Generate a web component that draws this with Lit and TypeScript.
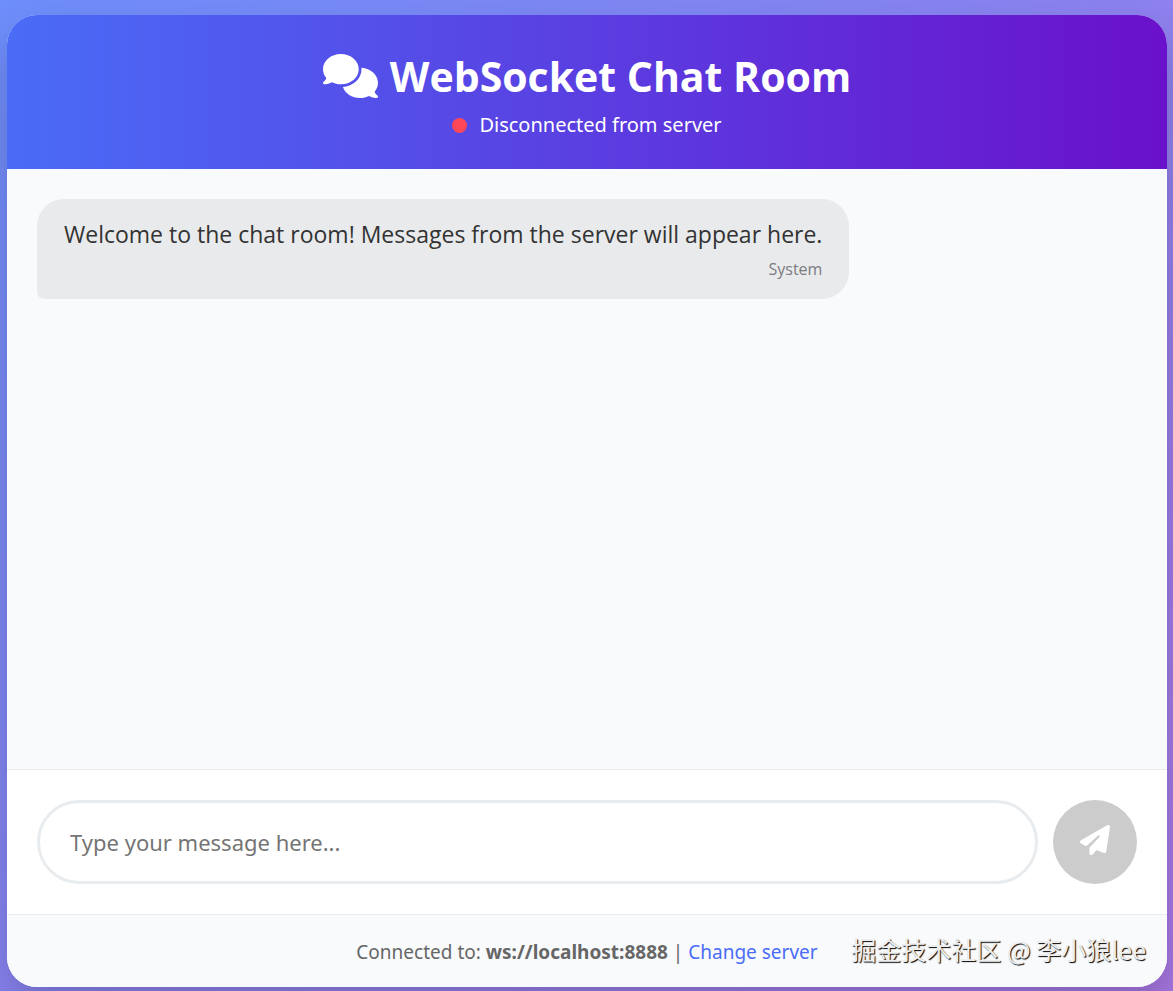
import { LitElement, html, css } from "lit";
import { customElement, state } from "lit/decorators.js";

interface Message {
  text: string;
  author: string;
}

const commentsIcon = html`<svg class="title-icon" viewBox="0 0 640 512" aria-hidden="true">
  <path fill="currentColor" d="M208 352c114.9 0 208-78.8 208-176S322.9 0 208 0S0 78.8 0 176c0 38.6 14.7 74.3 39.6 103.4c-3.5 9.4-8.7 17.7-14.2 24.7c-4.8 6.2-9.7 11-13.3 14.3c-1.8 1.6-3.3 2.9-4.3 3.7c-.5 .4-.9 .7-1.1 .8l-.2 .2C1 327.2-1.4 334.4 .8 340.9S9.1 352 16 352c21.8 0 43.8-5.6 62.1-12.5c9.2-3.5 17.8-7.4 25.3-11.4C134.1 343.3 169.8 352 208 352zM448 176c0 112.3-99.1 196.9-216.5 207C255.8 457.4 336.4 512 432 512c38.2 0 73.9-8.7 104.7-23.9c7.5 4 16 7.9 25.2 11.4c18.3 6.9 40.3 12.5 62.1 12.5c6.9 0 13.1-4.5 15.2-11.1c2.1-6.6-.2-13.8-5.8-17.9l-.2-.2c-.2-.2-.6-.4-1.1-.8c-1-.8-2.5-2-4.3-3.7c-3.6-3.3-8.5-8.1-13.3-14.3c-5.5-7-10.7-15.4-14.2-24.7c24.9-29 39.6-64.7 39.6-103.4c0-92.8-84.9-168.9-192.6-175.5c.4 5.1 .6 10.3 .6 15.5z"/>
</svg>`;

const planeIcon = html`<svg class="send-icon" viewBox="0 0 512 512" aria-hidden="true">
  <path fill="currentColor" d="M498.1 5.6c10.1 7 15.4 19.1 13.5 31.2l-64 416c-1.5 9.7-7.4 18.2-16 23s-18.9 5.4-28 1.6L284 427.7l-68.5 74.1c-8.9 9.7-22.9 12.9-35.2 8.1S160 493.2 160 480V396.4c0-4 1.5-7.8 4.2-10.7L331.8 202.8c5.8-6.3 5.6-16-.4-22s-15.7-6.4-22-.7L106 360.8 17.7 316.6C7.1 311.3 .3 300.7 0 288.9s5.9-22.8 16.1-28.7l448-256c10.7-6.1 23.9-5.5 34 1.4z"/>
</svg>`;

@customElement("app-root")
export class AppRoot extends LitElement {
  @state() private server = "ws://localhost:8888";
  @state() private messages: Message[] = [
    { text: "Welcome to the chat room! Messages from the server will appear here.", author: "System" },
  ];

  static styles = css`
    :host {
      display: flex;
      box-sizing: border-box;
      min-height: 100vh;
      padding: 15px 6px 4px 7px;
      position: relative;
      overflow: hidden;
      background: linear-gradient(135deg, #6e8efb, #a777e3);
      font-family: "Segoe UI", "Noto Sans", sans-serif;
      color: #333;
    }
    * {
      box-sizing: border-box;
      margin: 0;
    }
    .card {
      flex: 1;
      min-width: 0;
      display: flex;
      flex-direction: column;
      overflow: hidden;
      border-radius: 30px;
      background: #fff;
      box-shadow: 0 22px 45px rgba(0, 0, 0, 0.2);
    }
    .header {
      padding: 30px 30px 28px;
      color: #fff;
      text-align: center;
      background: linear-gradient(90deg, #4a6cf7, #6a11cb);
    }
    .title {
      display: flex;
      justify-content: center;
      align-items: center;
      gap: 12px;
      font-family: "Segoe UI", "Open Sans", sans-serif;
      font-size: 41px;
      line-height: 62px;
      font-weight: 700;
    }
    .title-icon {
      width: 55px;
      height: 44px;
      flex: none;
    }
    .status {
      display: flex;
      justify-content: center;
      align-items: center;
      gap: 12px;
      margin-top: 2px;
      font-size: 20px;
      line-height: 32px;
    }
    .dot {
      width: 15px;
      height: 15px;
      border-radius: 50%;
      background: #ff4757;
    }
    .messages {
      flex: 1;
      display: flex;
      flex-direction: column;
      align-items: flex-start;
      gap: 20px;
      padding: 30px;
      background: #f8fafc;
    }
    .message {
      max-width: 75%;
      padding: 17px 27px 12px;
      border-radius: 27px 27px 27px 7px;
      background: #e9eaec;
      font-family: "Segoe UI", "Open Sans", sans-serif;
    }
    .text {
      font-size: 23px;
      line-height: 36px;
    }
    .author {
      font-size: 16px;
      line-height: 35px;
      text-align: right;
      color: #7b7c7f;
    }
    .composer {
      display: flex;
      gap: 15px;
      padding: 30px;
      border-top: 1px solid #e9ecef;
      background: #fff;
    }
    .input {
      flex: 1;
      min-width: 0;
      height: 84px;
      padding: 0 30px;
      border: 3px solid #e9ecee;
      border-radius: 42px;
      outline: none;
      background: #fff;
      color: inherit;
      font: 22px "Segoe UI", "Noto Sans", sans-serif;
    }
    .input::placeholder {
      color: #757575;
      opacity: 1;
    }
    .send {
      display: grid;
      place-items: center;
      flex: none;
      width: 84px;
      height: 84px;
      padding: 0 0 4px;
      border: 0;
      border-radius: 50%;
      background: #ccc;
      color: #fff;
    }
    .send-icon {
      width: 30px;
      height: 30px;
    }
    .footer {
      padding: 23px 22px 21px;
      border-top: 1px solid #e9ecef;
      background: #f8fafc;
      color: #666;
      font-size: 19px;
      line-height: 28px;
      text-align: center;
    }
    .link {
      color: #4a6cf7;
      text-decoration: none;
    }
    .watermark {
      position: absolute;
      right: 27px;
      bottom: 24px;
      color: #eee;
      font: 25px/36px "Noto Sans CJK SC", sans-serif;
      text-shadow: 1px 1px 1px #000;
      pointer-events: none;
    }
  `;

  render() {
    return html`
      <main class="card">
        <header class="header">
          <h1 class="title">${commentsIcon}<span>WebSocket Chat Room</span></h1>
          <div class="status" role="status"><span class="dot"></span><span>Disconnected from server</span></div>
        </header>
        <section class="messages" aria-label="Messages">
          ${this.messages.map(
            (m) => html`<article class="message">
              <p class="text">${m.text}</p>
              <p class="author">${m.author}</p>
            </article>`
          )}
        </section>
        <form class="composer" @submit=${(e: Event) => e.preventDefault()}>
          <input class="input" type="text" aria-label="Message" placeholder="Type your message here..." />
          <button class="send" type="submit" aria-label="Send" disabled>${planeIcon}</button>
        </form>
        <footer class="footer">
          Connected to: <strong>${this.server}</strong> | <a class="link" href="#">Change server</a>
        </footer>
      </main>
      <div class="watermark">掘金技术社区 @ 李小狼lee</div>
    `;
  }
}
